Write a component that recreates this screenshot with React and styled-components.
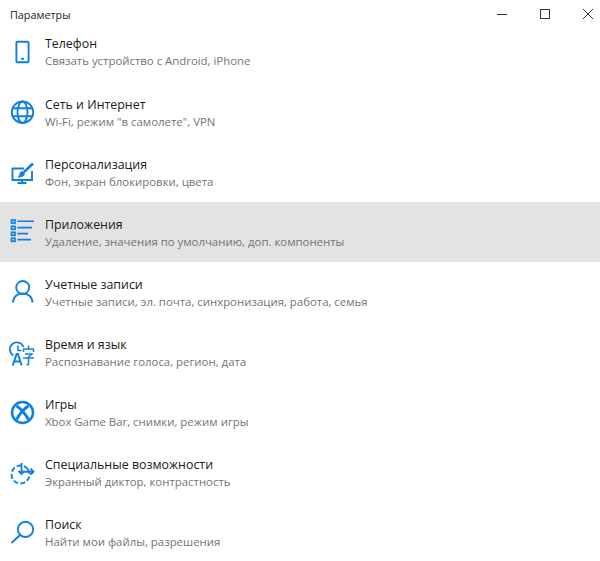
import React from "react";
import styled, { createGlobalStyle } from "styled-components";

const GlobalStyle = createGlobalStyle`
  html, body { margin: 0; padding: 0; background: #fff; }
  body { font-family: "Open Sans", "Noto Sans", "Liberation Sans", sans-serif; }
`;

const Page = styled.div`
  width: 600px;
  height: 561px;
  overflow: hidden;
  background: #fff;
`;

const TitleBar = styled.div`
  height: 28px;
  padding: 0 7px 2px 10px;
  display: flex;
  align-items: center;
  justify-content: space-between;
  font-size: 10.8px;
  color: #222;
`;

const WinButtons = styled.div`
  display: flex;
  align-items: center;
  gap: 33px;
  color: #333;
`;

const WinIcon = styled.svg`
  display: block;
  width: 10px;
  height: 10px;
  fill: none;
  stroke: currentColor;
`;

const List = styled.div`
  display: flex;
  flex-direction: column;
  margin-top: -8.2px;
`;

const Row = styled.div`
  height: 60.14px;
  display: flex;
  align-items: center;
  background: ${(p) => (p.$active ? "#e3e3e3" : "transparent")};
`;

const IconBox = styled.div`
  width: 44px;
  height: 26px;
  margin-right: 1px;
  flex: none;
  display: flex;
  align-items: center;
  justify-content: center;
  color: #0f80e2;
`;

const Texts = styled.div`
  display: flex;
  flex-direction: column;
  gap: 1px;
  padding-top: 2px;
  white-space: nowrap;
`;

const Title = styled.div`
  font-size: 12.4px;
  line-height: 16px;
  color: #1a1a1a;
`;

const Sub = styled.div`
  font-size: 11.4px;
  line-height: 16px;
  color: #747474;
`;

const Svg = ({ children, sw = 1.9 }) => (
  <svg width="26" height="26" viewBox="0 0 26 26" fill="none" stroke="currentColor" strokeWidth={sw}>
    {children}
  </svg>
);

const PhoneIcon = () => (
  <Svg>
    <rect x="7.4" y="2.7" width="12.2" height="20.6" rx="1" />
    <path d="M12 19.8h3" />
  </Svg>
);

const GlobeIcon = () => (
  <Svg>
    <circle cx="13.5" cy="13.2" r="10.7" />
    <ellipse cx="13.5" cy="13.2" rx="5" ry="10.7" />
    <path d="M4 9.200h19M4 17.200h19" />
  </Svg>
);

const PaintIcon = () => (
  <Svg>
    <path d="M15 9.500H3.500V21h19.500V12" />
    <path d="M13 21v3M8.500 24h9" />
    <path d="M24 4.500L15 13" strokeWidth="2.600" />
    <path d="M14 12.500c-2 0-3 1-3.200 2.600-.1 1-.6 2-1.800 2.900 2.600.3 6.800-.5 6.400-4z" fill="currentColor" strokeWidth="0.800" />
  </Svg>
);

const AppsIcon = () => (
  <Svg sw={1.6}>
    <path d="M8.300 2.300H25M8.300 8.600H23M8.300 14.600H19M8.300 20.600H22" />
    <g strokeWidth="1.700">
      <rect x="2.500" y="1" width="3.500" height="3" />
      <rect x="2.500" y="7.300" width="3.500" height="3" />
      <rect x="2.500" y="13.300" width="3.500" height="3" />
      <rect x="2.500" y="19.300" width="3.500" height="3" />
    </g>
  </Svg>
);

const UserIcon = () => (
  <Svg>
    <circle cx="13.700" cy="8.500" r="6.500" />
    <path d="M4 23.500c0-5.500 4-9 9.700-9s9.800 3.500 9.800 9" />
  </Svg>
);

const LangIcon = () => (
  <Svg sw={1.5}>
    <path d="M4.500 15.500A7 7 0 1 1 14.500 7" strokeWidth="1.800" />
    <path d="M9 5.500v5h3.500" />
    <path d="M3.700 25.500L7.600 14h1.300l3.800 11.500M5.200 21.500h6" strokeWidth="2" />
    <path d="M14 9h11M19.500 5.500V9M14.500 9v3M24.500 9v3M16 14h7l-3.500 3M14 18h11M19.500 16.500v8l-2 .5" />
  </Svg>
);

const XboxIcon = () => (
  <Svg>
    <circle cx="13.500" cy="12.500" r="10.500" strokeWidth="2.500" />
    <path d="M7.500 6C11 8 16 13.500 19.500 19.500M19.500 6C16 8 11 13.500 7.500 19.500" strokeWidth="3" />
  </Svg>
);

const AccessIcon = () => (
  <Svg sw={1.9}>
    <circle cx="11.500" cy="14.500" r="9" strokeDasharray="5 2.300" transform="rotate(-35 11.500 14.500)" />
    <path d="M12.500 3v11M9.500 11l3 3 3-3M12.500 11.700h12M21.500 8.700l3 3-3 3" />
  </Svg>
);

const SearchIcon = () => (
  <Svg>
    <circle cx="16.500" cy="9.400" r="7.600" />
    <path d="M11 15L2.500 23" />
  </Svg>
);

const items = [
  { icon: PhoneIcon, title: "Телефон", sub: "Связать устройство с Android, iPhone" },
  { icon: GlobeIcon, title: "Сеть и Интернет", sub: 'Wi-Fi, режим "в самолете", VPN' },
  { icon: PaintIcon, title: "Персонализация", sub: "Фон, экран блокировки, цвета" },
  { icon: AppsIcon, title: "Приложения", sub: "Удаление, значения по умолчанию, доп. компоненты", active: true },
  { icon: UserIcon, title: "Учетные записи", sub: "Учетные записи, эл. почта, синхронизация, работа, семья" },
  { icon: LangIcon, title: "Время и язык", sub: "Распознавание голоса, регион, дата" },
  { icon: XboxIcon, title: "Игры", sub: "Xbox Game Bar, снимки, режим игры" },
  { icon: AccessIcon, title: "Специальные возможности", sub: "Экранный диктор, контрастность" },
  { icon: SearchIcon, title: "Поиск", sub: "Найти мои файлы, разрешения" },
];

export default function App() {
  return (
    <Page>
      <GlobalStyle />
      <TitleBar>
        Параметры
        <WinButtons>
          <WinIcon viewBox="0 0 10 10">
            <path d="M0 5.500h10" />
          </WinIcon>
          <WinIcon viewBox="0 0 10 10">
            <rect x="0.500" y="0.500" width="9" height="9" />
          </WinIcon>
          <WinIcon viewBox="0 0 10 10">
            <path d="M0 0l10 10M10 0L0 10" />
          </WinIcon>
        </WinButtons>
      </TitleBar>
      <List>
        {items.map((it) => (
          <Row key={it.title} $active={it.active}>
            <IconBox>
              <it.icon />
            </IconBox>
            <Texts>
              <Title>{it.title}</Title>
              <Sub>{it.sub}</Sub>
            </Texts>
          </Row>
        ))}
      </List>
    </Page>
  );
}
